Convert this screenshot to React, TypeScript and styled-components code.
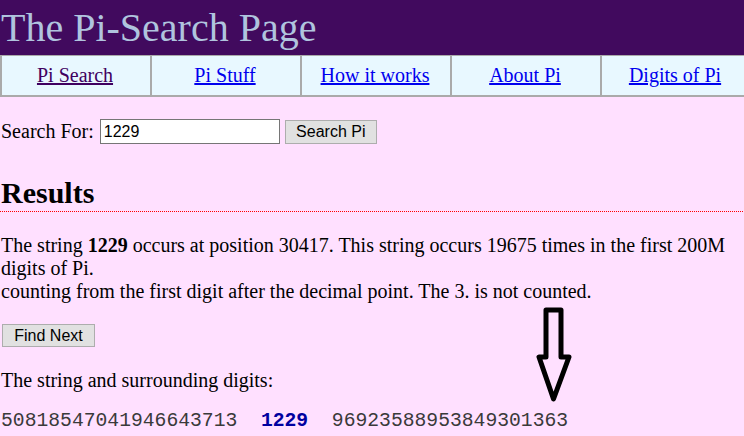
import styled, { createGlobalStyle } from "styled-components";

const GlobalStyle = createGlobalStyle`
  html, body {
    margin: 0;
    padding: 0;
    background: #ffe0ff;
    overflow: hidden;
  }
  body {
    font-family: "Liberation Serif", "Times New Roman", serif;
    font-size: 20px;
    color: #000;
  }
`;

const Page = styled.div`
  position: relative;
  width: 744px;
  height: 436px;
  overflow: hidden;
  background: #ffe0ff;
`;

const Header = styled.header`
  height: 55px;
  box-sizing: border-box;
  padding: 5px 0 0 1px;
  background: #410a5e;
`;

const Title = styled.h1`
  margin: 0;
  font-size: 40px;
  line-height: 46px;
  font-weight: normal;
  color: #b0c4de;
  white-space: nowrap;
`;

const Nav = styled.nav`
  display: grid;
  grid-template-columns: repeat(5, 150px);
  width: 750px;
  background: #e8f8ff;
  border-top: 1px solid #aaaaaa;
  border-bottom: 2px solid #aaaaaa;
  border-left: 2px solid #aaaaaa;
  box-sizing: border-box;
`;

const NavCell = styled.div`
  display: flex;
  align-items: center;
  justify-content: center;
  height: 39px;
  padding-right: 2px;
  border-right: 2px solid #aaaaaa;
  box-sizing: border-box;
`;

const NavLink = styled.a<{ $visited?: boolean }>`
  color: ${(p) => (p.$visited ? "#400060" : "#0000ee")};
  text-decoration: underline;
  font-size: 20px;
`;

const Content = styled.main`
  padding: 0 1px;
`;

const SearchForm = styled.form`
  display: flex;
  align-items: center;
  height: 25px;
  margin-top: 22px;
`;

const Label = styled.label`
  line-height: 23px;
  margin-right: 6px;
`;

const TextInput = styled.input`
  width: 180px;
  height: 25px;
  box-sizing: border-box;
  padding: 0 3px;
  border: 1px solid #767676;
  background: #fff;
  font-family: "Liberation Sans", Arial, sans-serif;
  font-size: 16px;
  color: #000;
  outline: none;
`;

const Button = styled.button<{ $w: number; $h: number }>`
  width: ${(p) => p.$w}px;
  height: ${(p) => p.$h}px;
  padding: 0;
  box-sizing: border-box;
  border: 1px solid #adadad;
  background: #e1e1e1;
  font-family: "Liberation Sans", Arial, sans-serif;
  font-size: 16px;
  line-height: 1;
  white-space: nowrap;
  text-align: center;
  color: #000;
  border-radius: 0;
`;

const SearchButton = styled(Button)`
  margin-left: 5px;
`;

const FindButton = styled(Button)`
  display: block;
  margin-top: 21px;
  margin-left: 1px;
`;

const ResultsTitle = styled.h2`
  position: relative;
  margin: 32px 0 0;
  font-size: 30px;
  line-height: 34px;
  font-weight: bold;
  padding-bottom: 2px;
  &::after {
    content: "";
    position: absolute;
    left: -1px;
    right: -2px;
    bottom: 0;
    height: 1px;
    background-image: linear-gradient(
      to right,
      #ff0000 0,
      #ff0000 1px,
      transparent 1px,
      transparent 2px
    );
    background-size: 2px 1px;
    background-repeat: repeat-x;
  }
`;

const Para = styled.p`
  margin: 22px 0 0;
  line-height: 23px;
`;

const Caption = styled.p`
  margin: 22px 0 0;
  line-height: 23px;
`;

const Digits = styled.pre`
  margin: 18px 0 0;
  font-family: "Liberation Mono", "Courier New", monospace;
  font-size: 19.7px;
  line-height: 23px;
  color: #3a3a3a;
`;

const Match = styled.b`
  color: #0000a0;
`;

const Arrow = styled.svg`
  position: absolute;
  left: 530px;
  top: 300px;
`;

const links = ["Pi Search", "Pi Stuff", "How it works", "About Pi", "Digits of Pi"];

export default function App() {
  return (
    <Page>
      <GlobalStyle />
      <Header>
        <Title>The Pi-Search Page</Title>
      </Header>
      <Nav>
        {links.map((l, i) => (
          <NavCell key={l}>
            <NavLink href="#" $visited={i === 0}>
              {l}
            </NavLink>
          </NavCell>
        ))}
      </Nav>
      <Content>
        <SearchForm onSubmit={(e) => e.preventDefault()}>
          <Label>Search For:</Label>
          <TextInput defaultValue="1229" />
          <SearchButton type="button" $w={92} $h={24}>
            Search Pi
          </SearchButton>
        </SearchForm>
        <ResultsTitle>Results</ResultsTitle>
        <Para>
          The string <b>1229</b> occurs at position 30417. This string occurs 19675 times in the first 200M
          <br />
          digits of Pi.
          <br />
          counting from the first digit after the decimal point. The 3. is not counted.
        </Para>
        <FindButton type="button" $w={93} $h={23}>
          Find Next
        </FindButton>
        <Caption>The string and surrounding digits:</Caption>
        <Digits>
          {"50818547041946643713  "}
          <Match>1229</Match>
          {"  96923588953849301363"}
        </Digits>
      </Content>
      <Arrow width="48" height="110" viewBox="0 0 48 110">
        <polygon
          points="16,10 31,10 31,57 39,57 23.5,99 9,57 16,57"
          fill="none"
          stroke="#000"
          strokeWidth="5"
          strokeLinejoin="round"
        />
      </Arrow>
    </Page>
  );
}
